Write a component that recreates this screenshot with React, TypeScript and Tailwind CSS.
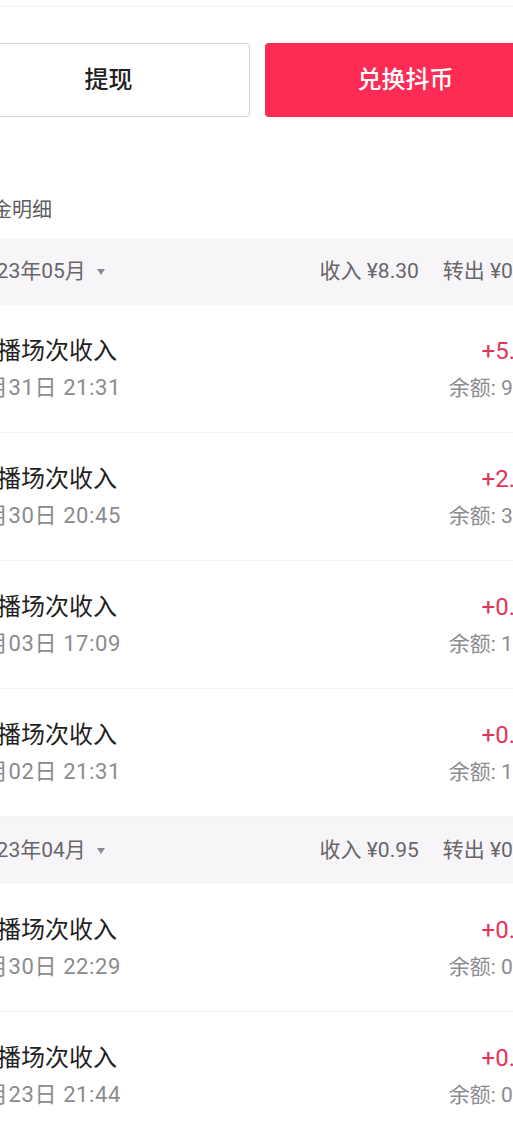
import React from 'react'

type Record = {
  title: string
  time: string
  amount: string
  balance: string
}

type MonthGroup = {
  month: string
  income: string
  transfer: string
  records: Record[]
}

const groups: MonthGroup[] = [
  {
    month: '2023年05月',
    income: '¥8.30',
    transfer: '¥0.00',
    records: [
      { title: '直播场次收入', time: '5月31日 21:31', amount: '+5.25', balance: '9.15' },
      { title: '直播场次收入', time: '5月30日 20:45', amount: '+2.48', balance: '3.90' },
      { title: '直播场次收入', time: '5月03日 17:09', amount: '+0.29', balance: '1.42' },
      { title: '直播场次收入', time: '5月02日 21:31', amount: '+0.28', balance: '1.13' },
    ],
  },
  {
    month: '2023年04月',
    income: '¥0.95',
    transfer: '¥0.00',
    records: [
      { title: '直播场次收入', time: '4月30日 22:29', amount: '+0.40', balance: '0.85' },
      { title: '直播场次收入', time: '4月23日 21:44', amount: '+0.30', balance: '0.45' },
    ],
  },
]

const font = { fontFamily: 'Roboto, "Noto Sans CJK SC", sans-serif' }

function RecordRow({ r }: { r: Record }) {
  return (
    <div className="h-[128px] flex items-center justify-between pl-[6px] pr-[4px] border-b border-[#f3f3f3]">
      <div className="flex flex-col gap-[9px]">
        <span className="text-[24px] leading-[30px] text-[#1f1f24]">{r.title}</span>
        <span className="text-[22px] leading-[26px] tracking-[0.6px] text-[#8b8b90]">{r.time}</span>
      </div>
      <div className="flex flex-col items-end gap-[9px]">
        <span className="text-[24px] leading-[30px] text-[#e5335b]">{r.amount}</span>
        <span className="text-[21px] leading-[26px] text-[#8b8b90]">余额: {r.balance}</span>
      </div>
    </div>
  )
}

export default function App() {
  return (
    <div className="w-[513px] h-[1129px] overflow-hidden bg-white" style={font}>
      <div className="ml-[-33px] w-[579px]">
        <div className="h-[7px] border-b border-[#f0f0f0]" />

        <div className="mt-[36px] flex gap-[15px]">
          <button className="flex-1 h-[74px] rounded-[4px] border border-[#d4d4d6] bg-white text-[24px] font-medium text-[#1f1f24]">
            提现
          </button>
          <button className="flex-1 h-[74px] rounded-[4px] bg-[#fe2c55] text-[24px] font-medium text-white">
            兑换抖币
          </button>
        </div>

        <div className="pl-[5px] pt-[79px] pb-[14px] text-[20px] leading-[28px] text-[#5c5c61]">资金明细</div>

        {groups.map((g) => (
          <div key={g.month}>
            <div className="h-[67px] flex items-center justify-between pl-[6px] pr-[4px] bg-[#f7f5f7] text-[21px] text-[#66666b]">
              <div className="flex items-center gap-[11px]">
                <span>{g.month}</span>
                <svg width="8" height="6" viewBox="0 0 8 6">
                  <path d="M0 0 H8 L4 6 Z" fill="#8b8b90" />
                </svg>
              </div>
              <div className="flex items-center gap-[24px]">
                <span>收入 {g.income}</span>
                <span>转出 {g.transfer}</span>
              </div>
            </div>
            {g.records.map((r, i) => (
              <RecordRow key={i} r={r} />
            ))}
          </div>
        ))}
      </div>
    </div>
  )
}
